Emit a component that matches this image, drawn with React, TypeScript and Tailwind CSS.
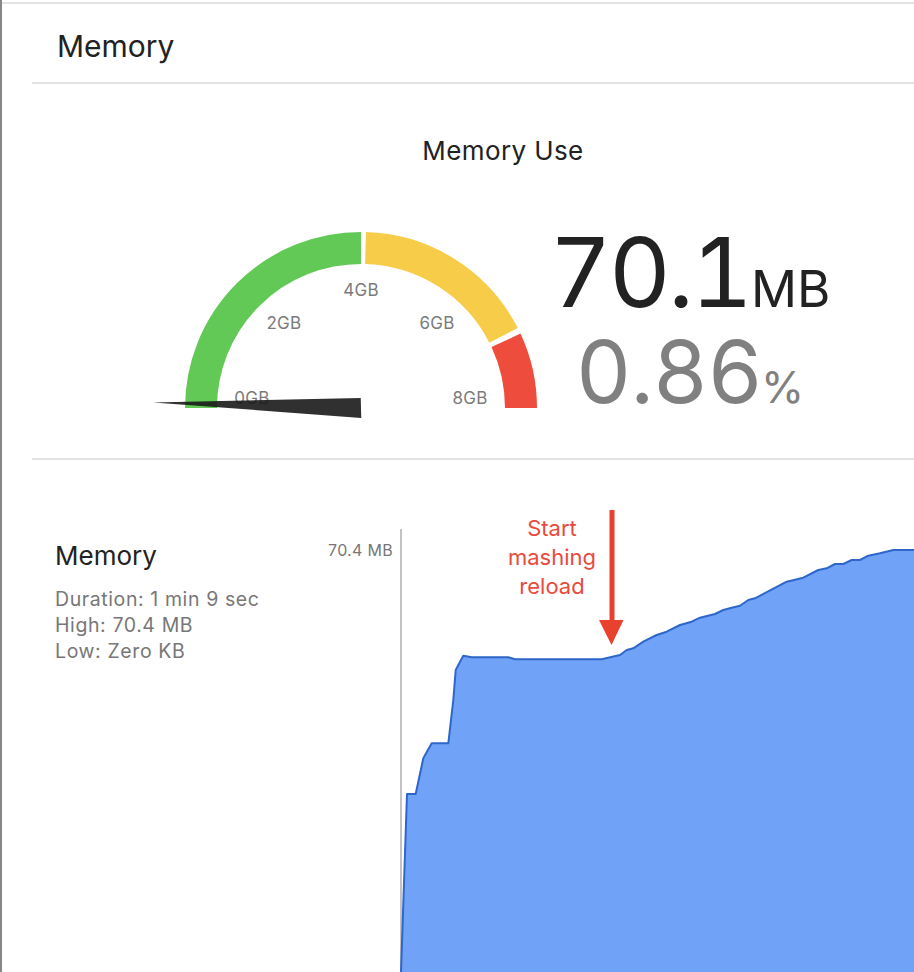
import React from "react";

const FONT = { fontFamily: "Inter, 'Noto Sans', 'Liberation Sans', sans-serif" };

// gauge geometry (svg coords)
const CX = 221;
const CY = 187;
const R = 160;

function pt(t: number, r: number) {
  return [CX - r * Math.cos(t * Math.PI), CY - r * Math.sin(t * Math.PI)];
}

function arc(t0: number, t1: number) {
  const [x0, y0] = pt(t0, R);
  const [x1, y1] = pt(t1, R);
  return `M ${x0} ${y0} A ${R} ${R} 0 0 1 ${x1} ${y1}`;
}

const gaugeLabels = [
  { text: "0GB", x: 112, y: 177 },
  { text: "2GB", x: 144, y: 102 },
  { text: "4GB", x: 221, y: 69 },
  { text: "6GB", x: 297, y: 102 },
  { text: "8GB", x: 330, y: 177 },
];

function Gauge({ fraction }: { fraction: number }) {
  const a = fraction * Math.PI;
  const tip = [CX - 208 * Math.cos(a), CY - 208 * Math.sin(a)];
  const b1 = [CX + 10 * Math.sin(a), CY + 10 * Math.cos(a)];
  const b2 = [CX - 10 * Math.sin(a), CY - 10 * Math.cos(a)];
  return (
    <svg width="400" height="200" viewBox="0 0 400 200" className="block shrink-0">
      <path d={arc(0, 0.5)} stroke="#63c956" strokeWidth="32" fill="none" />
      <path d={arc(0.509, 0.85)} stroke="#f7cc48" strokeWidth="32" fill="none" />
      <path d={arc(0.861, 1)} stroke="#ee4d3d" strokeWidth="32" fill="none" />
      {gaugeLabels.map((l) => (
        <text
          key={l.text}
          x={l.x}
          y={l.y}
          textAnchor="middle"
          dominantBaseline="central"
          fill="#7b7b7b"
          fontSize="17"
          letterSpacing="0.3"
          style={FONT}
        >
          {l.text}
        </text>
      ))}
      <polygon
        points={`${tip[0]},${tip[1]} ${b1[0]},${b1[1]} ${b2[0]},${b2[1]}`}
        fill="#1a1a1a"
        fillOpacity="0.9"
      />
    </svg>
  );
}

const memPoints: [number, number][] = [
  [1, 472], [7, 294], [15.7, 294], [23.3, 258.3], [31.7, 243.3], [48.3, 243.3],
  [53.3, 200], [55.7, 170], [63.3, 155.7], [71.7, 157.3], [108.3, 157.3], [115, 159.3],
  [201.7, 159.3], [220, 155], [226.7, 150], [233.3, 148.3], [243.3, 141.7], [256.7, 135],
  [266.7, 131.7], [280, 125], [291.7, 121.7], [300, 117.7], [315, 114], [323.3, 110],
  [331.7, 107.7], [340, 105.7], [348.3, 100], [355, 98.3], [386.7, 81.7], [403.3, 77.7],
  [418.3, 70], [426.7, 68.3], [435, 64], [443.3, 64], [451.7, 60], [460, 60],
  [468.3, 55.7], [480, 53.3], [493.3, 50], [514, 50],
];

function MemoryChart() {
  const line = memPoints.map((p) => p.join(",")).join(" ");
  const area = `${line} 514,472 1,472`;
  return (
    <div className="relative w-[514px] h-[472px] shrink-0">
      <svg width="514" height="472" viewBox="0 0 514 472" className="block">
        <line x1="1" y1="29" x2="1" y2="472" stroke="#c3c3c3" strokeWidth="2" />
        <polygon points={area} fill="#70a3f7" />
        <polyline points={line} fill="none" stroke="#2f66c9" strokeWidth="2" strokeLinejoin="round" />
        <rect x="209.5" y="10" width="5" height="112" fill="#e8412d" />
        <polygon points="199,120 223.5,120 211.5,145" fill="#e8412d" />
      </svg>
      <div
        className="absolute left-[92px] top-[14px] w-[120px] text-center text-[22px] leading-[29px] text-[#ea4a3b]"
        style={FONT}
      >
        Start
        <br />
        mashing
        <br />
        reload
      </div>
    </div>
  );
}

export default function App() {
  return (
    <div className="w-full h-[972px] bg-white border-l-2 border-[#86868b] overflow-hidden text-[#222]" style={FONT}>
      <div className="mt-[2px] h-[2px] bg-[#e3e3e3]" />
      <div className="ml-[30px]">
        <div className="h-[80px] pl-[25px] pt-[6px] flex items-center text-[30px] border-b-2 border-[#e3e3e3]">
          Memory
        </div>

        <div className="h-[376px] border-b-2 border-[#e3e3e3] flex flex-col">
          <div className="pt-[47px] h-[137px] text-center text-[26px] tracking-[0.4px] w-[942px]">Memory Use</div>
          <div className="flex pl-[108px]">
            <Gauge fraction={0.0086} />
            <div className="w-[300px] mt-[3px] flex flex-col items-center">
              <div className="flex items-baseline leading-none">
                <span className="text-[96px] tabular-nums tracking-[-3px]">70.1</span>
                <span className="text-[51px] ml-[1px]">MB</span>
              </div>
              <div className="flex items-baseline leading-none text-[#808080] mt-[9px]">
                <span className="text-[86px] tabular-nums tracking-[-1px]">0.86</span>
                <span className="text-[44px] -ml-[1px]">%</span>
              </div>
            </div>
          </div>
        </div>

        <div className="flex pt-[40px]">
          <div className="w-[338px] pl-[23px] pt-[40px]">
            <div className="text-[26px] leading-[32px]">Memory</div>
            <div className="mt-[14px] text-[19.5px] tracking-[0.6px] leading-[26px] text-[#777]">
              <div>Duration: 1 min 9 sec</div>
              <div>High: 70.4 MB</div>
              <div>Low: Zero KB</div>
            </div>
          </div>
          <div className="w-[30px] pr-[7px] pt-[38px] text-[16px] tracking-[0.3px] text-[#777] whitespace-nowrap flex justify-end">
            70.4 MB
          </div>
          <MemoryChart />
        </div>
      </div>
    </div>
  );
}
